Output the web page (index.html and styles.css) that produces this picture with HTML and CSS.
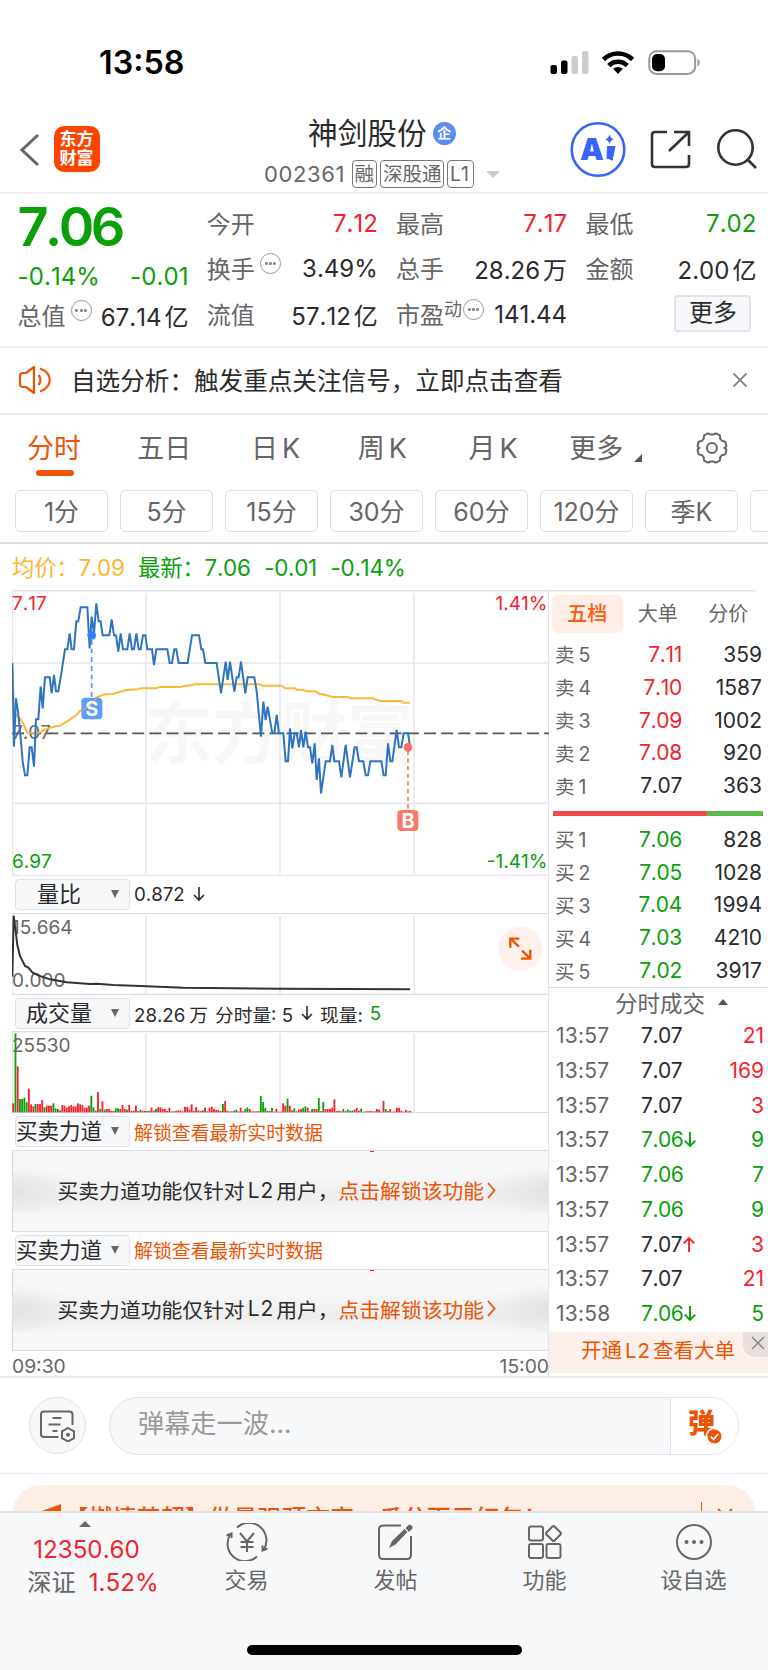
FILE: index.html
```html
<!DOCTYPE html>
<html lang="zh-CN">
<head>
    <meta charset="UTF-8">
    <meta name="viewport" content="width=device-width, initial-scale=1.0">
    <title>神剑股份 002361</title>
    <link rel="stylesheet" href="styles.css">
</head>
<body>
    <div class="status-bar">
        <span class="status-time">13:58</span>
        <svg class="status-icons" width="152" height="28" viewBox="549 49 152 28">
            <rect x="550.500" y="65" width="6.500" height="9" rx="2"/>
            <rect x="561" y="60.500" width="6.500" height="13.500" rx="2"/>
            <rect x="571.500" y="56" width="6.500" height="18" rx="2" fill="#ccc"/>
            <rect x="582" y="51" width="6.500" height="23" rx="2" fill="#ccc"/>
            <g fill="none" stroke="#000" stroke-width="4.600">
                <path d="M603.500 59.500a20.500 20.500 0 0 1 29 0"/>
                <path d="M608.800 65.600a13 13 0 0 1 18.400 0"/>
            </g>
            <path d="M618 74l-4.800-5.200a7 7 0 0 1 9.600 0z"/>
            <rect x="649.200" y="51.200" width="46" height="22.800" rx="7.500" fill="none" stroke="#999" stroke-width="2"/>
            <rect x="652" y="54" width="13" height="17.200" rx="5"/>
            <path d="M697.500 59c3 1 3 6 0 7.500z" fill="#999"/>
        </svg>
    </div>

    <header class="header">
        <svg class="back" width="22" height="34" viewBox="0 0 22 34"><path d="M19 2L3 17l16 15" fill="none" stroke="#666" stroke-width="3"/></svg>
        <div class="logo">东方<br>财富</div>
        <div class="stock">
            <div class="stock-name">神剑股份<i class="badge">企</i></div>
            <div class="stock-code">002361<span class="tags"><b>融</b><b>深股通</b><b>L1</b></span><i class="caret"></i></div>
        </div>
        <svg class="header-icons" width="198" height="60" viewBox="568 119 198 60">
            <circle cx="598" cy="149.500" r="26.300" fill="none" stroke="#3964fa" stroke-width="2.600"/>
            <text class="ai" x="580" y="160">A</text>
            <path d="M607 148.500h5.500l-1.500 8 q0 1.500 2 1.500M609.200 150v9" stroke="#3964fa" stroke-width="5" fill="none"/>
            <path d="M609.500 134.500q1 4 4.500 4.800q-3.500 1-4.500 4.800q-1-3.800-4.500-4.800q3.500-.8 4.500-4.800z" fill="#3964fa"/>
            <g fill="none" stroke="#333" stroke-width="2.600">
                <path d="M667 132h-12q-3 0-3 3v29q0 3 3 3h31q3 0 3-3v-9"/>
                <path d="M674 132h15v14M689 132l-20 19"/>
                <circle cx="735.500" cy="147.500" r="17.200"/>
                <path d="M747.500 159.500l8.500 8.500"/>
            </g>
        </svg>
    </header>

    <section class="quote">
        <div class="quote-main">
            <div class="price">7.06</div>
            <div class="change"><span>-0.14%</span><span>-0.01</span></div>
            <div class="cell"><label>总值</label><i class="dots"></i><span>67.14<em>亿</em></span></div>
        </div>
        <div class="quote-col">
            <div class="cell"><label>今开</label><span class="red">7.12</span></div>
            <div class="cell"><label>换手</label><i class="dots"></i><span>3.49%</span></div>
            <div class="cell"><label>流值</label><span>57.12<em>亿</em></span></div>
        </div>
        <div class="quote-col">
            <div class="cell"><label>最高</label><span class="red">7.17</span></div>
            <div class="cell"><label>总手</label><span>28.26<em>万</em></span></div>
            <div class="cell"><label>市盈<sup>动</sup></label><i class="dots near"></i><span>141.44</span></div>
        </div>
        <div class="quote-col">
            <div class="cell"><label>最低</label><span class="green">7.02</span></div>
            <div class="cell"><label>金额</label><span>2.00<em>亿</em></span></div>
            <div class="cell"><button class="more">更多</button></div>
        </div>
    </section>

    <section class="notice">
        <svg width="34" height="32" viewBox="0 0 34 32" fill="none" stroke="#ec5406" stroke-width="2.200" stroke-linejoin="round">
            <path d="M16 3v26l-8-6H5q-3 0-3-3v-8q0-3 3-3h3z"/>
            <path d="M20.500 11q4 5 0 10"/>
            <path d="M22 4.500c13 5 13 18 0 23"/>
        </svg>
        <p>自选分析：触发重点关注信号，立即点击查看</p>
        <svg class="close" width="16" height="16" viewBox="0 0 16 16"><path d="M1.500 1.500l13 13M14.500 1.500l-13 13" stroke="#888" stroke-width="1.800"/></svg>
    </section>

    <nav class="tabs">
        <a class="tab active">分时</a>
        <a class="tab">五日</a>
        <a class="tab">日<s></s>K</a>
        <a class="tab">周<s></s>K</a>
        <a class="tab">月<s></s>K</a>
        <a class="tab tab-more">更多</a>
        <svg class="gear" width="32" height="32" viewBox="0 0 32 32" fill="none" stroke="#666" stroke-width="2">
            <path d="M11.500 1.500q1.500-.5 2.500 1h4q1-1.500 2.500-1l3 1.500q1 1 .5 3l2 3q3 0 3.500 1.500l1 3.500q0 1-2 2q2 1 2 2l-1 3.500q-.5 1.500-3.500 1.500l-2 3q.5 2-.5 3l-3 1.500q-1.500.5-2.500-1h-4q-1 1.500-2.500 1l-3-1.500q-1-1-.5-3l-2-3q-3 0-3.500-1.500l-1-3.500q0-1 2-2q-2-1-2-2l1-3.500q.5-1.500 3.500-1.500l2-3q-.5-2 .5-3z" stroke-linejoin="round"/>
            <circle cx="16" cy="16" r="5"/>
        </svg>
    </nav>
    <div class="periods">
        <a>1分</a><a>5分</a><a>15分</a><a>30分</a><a>60分</a><a>120分</a><a>季K</a><a></a>
    </div>

    <div class="summary"><span class="avg">均价：<b>7.09</b></span><span class="last">最新：<b>7.06</b></span><span class="diff">-0.01</span><span>-0.14%</span></div>

    <main class="market">
        <div class="charts">
            <svg class="chart" width="537" height="286" viewBox="36 30 1611 858">
                <g class="grid">
                    <path d="M438 39V881M840 39V881M1242 39V881"/>
                    <path d="M36 249H1647M36 670H1647M36 887H1647M37 30V888"/>
                </g>
                <text class="watermark" x="435" y="534">东方财富</text>
                <path class="base-line" d="M36 460H1647"/>
                <text class="axis" x="36" y="477">7.07</text>
                <polyline class="avg-line" points="37,255 42,400 60,415 72,435 82,458 110,460 125,455 135,448 162,440 180,437 200,425 228,406 240,393 275,370 290,352 315,343 338,342 355,337 380,330 412,328 425,325 468,325 478,321 543,321 555,317 575,316 583,313 778,313 788,317 845,317 855,325 885,325 890,329 910,330 918,334 945,334 960,342 980,346 997,351 1043,351 1050,355 1120,355 1128,359 1140,363 1205,363 1212,368 1230,368"/>
                <polyline class="price-line" points="37,249 42,500 48,355 54,395 60,450 68,545 75,586 82,586 89,502 95,502 102,560 108,418 115,418 122,320 128,385 135,292 149,292 155,340 162,285 168,334 175,334 182,292 195,208 202,208 209,160 215,208 222,208 229,124 235,124 242,82 262,82 269,205 275,110 282,160 289,70 296,124 302,124 308,166 328,166 335,118 342,166 348,166 355,215 362,160 369,208 382,208 389,160 396,208 402,208 409,160 416,208 422,208 429,166 436,166 442,208 456,208 462,255 469,208 502,208 509,249 516,249 523,208 529,208 536,249 563,249 576,166 597,166 604,208 609,208 616,249 650,249 663,340 677,245 683,300 690,245 703,335 710,292 716,292 723,245 736,340 743,292 763,292 770,334 783,470 790,365 797,420 803,380 817,460 823,460 830,405 837,460 850,460 857,544 864,544 870,445 877,505 884,460 890,460 897,502 903,450 910,502 917,455 924,502 930,502 937,550 944,490 950,600 957,535 963,640 977,544 990,544 997,495 1003,544 1017,544 1024,592 1037,495 1050,592 1064,502 1070,502 1077,544 1090,544 1097,586 1104,586 1111,544 1144,544 1151,586 1157,586 1164,490 1171,544 1177,544 1190,450 1197,502 1204,502 1211,460 1224,460 1230,498"/>
                <!-- 买卖点 -->
                <path d="M275 180V355" stroke="#4c94f8" stroke-width="5" stroke-dasharray="14 12"/>
                <circle cx="275" cy="166" r="13" fill="#2f80f5"/>
                <rect x="244" y="353" width="63" height="65" rx="12" fill="#5b9dfc"/>
                <text class="mark" x="275.500" y="408">S</text>
                <path d="M247 392L275 370L290 354" class="avg-line" opacity=".45"/>
                <path d="M1224 512V690" stroke="#fb7768" stroke-width="5" stroke-dasharray="13 10"/>
                <circle cx="1224" cy="502" r="13" fill="#fb6d5d"/>
                <rect x="1192" y="690" width="63" height="63" rx="12" fill="#fb7768"/>
                <text class="mark" x="1224" y="744">B</text>
                <text class="axis up" x="36" y="89">7.17</text>
                <text class="axis down" x="36" y="865">6.97</text>
                <text class="axis up end" x="1642" y="89">1.41%</text>
                <text class="axis down end" x="1642" y="865">-1.41%</text>
            </svg>

            <div class="bar"><a class="select">量比</a><span>0.872</span><svg class="arrow" viewBox="0 0 12 16"><path d="M6 1v13M1 9l5 5 5-5"/></svg></div>
            <svg class="chart" width="537" height="82" viewBox="36 129 1611 246">
                <path class="grid" d="M438 137V373M840 137V373M1242 137V373M37 129V374"/>
                <path class="grid edge" d="M36 130H1647M36 373H1647"/>
                <text class="axis" x="36" y="192">15.664</text>
                <text class="axis" x="36" y="352">0.000</text>
                <polyline class="ratio-line" points="37,320 41,137 46,175 52,225 60,258 75,288 85,293 98,308 120,318 150,328 200,337 270,342 290,341 340,345 440,349 550,353 700,355 840,356 1230,358"/>
                <circle cx="1561" cy="236" r="66" fill="#fef1eb"/>
                <path class="expand" d="M1557 230L1531 206M1531 233V206H1558M1566 242L1591 266M1591 239V266H1563"/>
            </svg>

            <div class="bar"><a class="select">成交量</a><span>28.26<s></s>万</span><span class="gap">分时量: 5</span><svg class="arrow" viewBox="0 0 12 16"><path d="M6 1v13M1 9l5 5 5-5"/></svg><span class="gap">现量:</span><span class="gap green">5</span></div>
            <svg class="chart" width="537" height="82" viewBox="36 484 1611 246">
                <path class="grid" d="M438 492V728M840 492V728M1242 492V728M37 484V729"/>
                <path class="grid edge" d="M36 486H1647M36 729H1647"/>
                <g id="volume"></g>
                <text class="axis" x="36" y="547">25530</text>
            </svg>

            <div class="bar"><a class="select full">买卖力道</a><span class="lock">解锁查看最新实时数据</span></div>
            <div class="l2">买卖力道功能仅针对<em>L2</em>用户，<a>点击解锁该功能</a><svg width="9" height="17" viewBox="0 0 9 17"><path d="M1 1l6.500 7.500L1 16"/></svg></div>
            <div class="bar"><a class="select full">买卖力道</a><span class="lock">解锁查看最新实时数据</span></div>
            <div class="l2">买卖力道功能仅针对<em>L2</em>用户，<a>点击解锁该功能</a><svg width="9" height="17" viewBox="0 0 9 17"><path d="M1 1l6.500 7.500L1 16"/></svg></div>
            <div class="times"><span>09:30</span><span>15:00</span></div>
        </div>

        <aside class="side">
            <div class="side-tabs"><a class="on">五档</a><a>大单</a><a>分价</a></div>
            <ul class="book">
                <li><label>卖<s></s>5</label><b class="red">7.11</b><span>359</span></li>
                <li><label>卖<s></s>4</label><b class="red">7.10</b><span>1587</span></li>
                <li><label>卖<s></s>3</label><b class="red">7.09</b><span>1002</span></li>
                <li><label>卖<s></s>2</label><b class="red">7.08</b><span>920</span></li>
                <li><label>卖<s></s>1</label><b>7.07</b><span>363</span></li>
            </ul>
            <div class="ratio"></div>
            <ul class="book">
                <li><label>买<s></s>1</label><b class="green">7.06</b><span>828</span></li>
                <li><label>买<s></s>2</label><b class="green">7.05</b><span>1028</span></li>
                <li><label>买<s></s>3</label><b class="green">7.04</b><span>1994</span></li>
                <li><label>买<s></s>4</label><b class="green">7.03</b><span>4210</span></li>
                <li><label>买<s></s>5</label><b class="green">7.02</b><span>3917</span></li>
            </ul>
            <div class="deal-title">分时成交<i></i></div>
            <ul class="deals">
                <li><label>13:57</label><b>7.07</b><span class="red">21</span></li>
                <li><label>13:57</label><b>7.07</b><span class="red">169</span></li>
                <li><label>13:57</label><b>7.07</b><span class="red">3</span></li>
                <li><label>13:57</label><b class="green">7.06</b><svg class="arrow green" viewBox="0 0 12 16"><path d="M6 1v13M1 9l5 5 5-5"/></svg><span class="green">9</span></li>
                <li><label>13:57</label><b class="green">7.06</b><span class="green">7</span></li>
                <li><label>13:57</label><b class="green">7.06</b><span class="green">9</span></li>
                <li><label>13:57</label><b>7.07</b><svg class="arrow red" viewBox="0 0 12 16"><path d="M6 15V2M1 7l5-5 5 5"/></svg><span class="red">3</span></li>
                <li><label>13:57</label><b>7.07</b><span class="red">21</span></li>
                <li><label>13:58</label><b class="green">7.06</b><svg class="arrow green" viewBox="0 0 12 16"><path d="M6 1v13M1 9l5 5 5-5"/></svg><span class="green">5</span></li>
            </ul>
            <div class="promo">开通<em>L2</em>查看大单<i><svg width="14" height="14" viewBox="0 0 14 14"><path d="M1 1l12 12M13 1L1 13" stroke="#888" stroke-width="1.500"/></svg></i></div>
        </aside>
    </main>

    <section class="comment">
        <div class="round">
            <svg width="36" height="32" viewBox="0 0 36 32" fill="none" stroke="#666" stroke-width="2">
                <path d="M32.500 15V4.500q0-3-3-3H4q-3 0-3 3V24q0 3 3 3h14.500"/>
                <path d="M12.500 8h9M8.500 14.500h12M12.500 21h5"/>
                <path d="M28 18l6 3.400v6.800L28 31.500l-6-3.300v-6.800z"/>
                <circle cx="28" cy="24.800" r="1" fill="#666"/>
            </svg>
        </div>
        <div class="input">
            <span>弹幕走一波...</span>
            <div class="danmu">弹<svg width="15" height="15" viewBox="0 0 15 15"><circle cx="7.500" cy="7.500" r="7" fill="#ec5406"/><path d="M3.800 7.500l2.700 3 4.700-5.500" fill="none" stroke="#fff" stroke-width="1.800"/></svg></div>
        </div>
    </section>

    <section class="banner-wrap">
        <div class="banner">
            <svg width="24" height="24" viewBox="0 0 24 24"><path d="M0 10L22 2v20L0 14z" fill="#ec5406"/></svg>
            <span>【燃情英超】做最强预言家，瓜分百元红包！</span>
            <i></i>
            <svg width="18" height="18" viewBox="0 0 18 18"><path d="M2 2l14 14M16 2L2 16" stroke="#ec5406" stroke-width="2"/></svg>
        </div>
    </section>

    <footer class="nav">
        <div class="nav-row">
            <div class="index">
                <i></i>
                <div>12350.60</div>
                <div><label>深证</label>1.52%</div>
            </div>
            <div class="nav-item">
                <svg width="42" height="38" viewBox="0 0 42 38">
                    <path d="M11 4.500A17.500 17.500 0 0 1 37.500 27M31 33.500A17.500 17.500 0 0 1 4.500 11M.5 12.500l5-2v4.500M36.500 22.500V27.500l5-2"/>
                    <path d="M14 10l7 8.500L28 10M21 18.500V29M14.500 19h13M14.500 24h13"/>
                </svg>
                交易
            </div>
            <div class="nav-item">
                <svg width="42" height="38" viewBox="0 0 42 38">
                    <path d="M26 2.500H8q-4 0-4 4V32q0 4 4 4h24q4 0 4-4V13"/>
                    <path d="M14 25l3-7L29.500 6l3 3L20.500 21.500zM30.500 5L33.500 2q2-1 3.500 1t-.5 3.500L34 9z" fill="#666" stroke="none"/>
                </svg>
                发帖
            </div>
            <div class="nav-item">
                <svg width="42" height="38" viewBox="0 0 42 38">
                    <rect x="5" y="3.500" width="14" height="14" rx="2"/>
                    <rect x="5" y="21" width="14" height="14" rx="2"/>
                    <rect x="22.500" y="21" width="14" height="14" rx="2"/>
                    <path d="M28.500 3.500q1-1 2 0l6 6q1 1 0 2l-6 6q-1 1-2 0l-6-6q-1-1 0-2z"/>
                </svg>
                功能
            </div>
            <div class="nav-item">
                <svg width="42" height="38" viewBox="0 0 42 38">
                    <circle cx="21" cy="19" r="17"/>
                    <g fill="#666" stroke="none"><circle cx="13.500" cy="19" r="2"/><circle cx="21" cy="19" r="2"/><circle cx="28.500" cy="19" r="2"/></g>
                </svg>
                设自选
            </div>
        </div>
        <div class="home"></div>
    </footer>

    <script src="script.js"></script>
</body>
</html>
```
FILE: styles.css
```css
:root {
    --red: #f5222d;
    --green: #0aa00a;
    --orange: #ec5406;
    --gray: #666;
    --dark: #2b2b2b;
    --line: #e2e5ea;
}

* {
    box-sizing: border-box;
    margin: 0;
    padding: 0;
}

body {
    width: 768px;
    height: 1670px;
    overflow: hidden;
    background: #fff;
    color: var(--dark);
    font-family: Inter, 'Noto Sans CJK SC', sans-serif;
    font-size: 24px;
    font-kerning: none;
    display: flex;
    flex-direction: column;
}

body > * {
    flex-shrink: 0;
}

i, em {
    font-style: normal;
}

b, button {
    font-weight: 400;
}

ul {
    list-style: none;
}

/* 中英文之间的小空隙 */
s {
    display: inline-block;
    width: 4px;
}

.red { color: var(--red); }
.green { color: var(--green); }

/* 状态栏 */
.status-bar {
    height: 112px;
    padding: 46px 67px 0 99px;
    display: flex;
    justify-content: space-between;
}

.status-time {
    font-size: 32.3px;
    font-weight: 600;
    line-height: 34px;
    color: #000;
}

.status-icons {
    margin-top: 3px;
}

/* 顶部 */
.header {
    height: 82px;
    border-bottom: 2px solid #eee;
    display: flex;
    padding-left: 19px;
    color: var(--dark);
}

.back {
    margin-top: 21px;
}

.logo {
    width: 46px;
    height: 46px;
    margin: 14px 0 0 12.5px;
    border-radius: 10px;
    background: #ff4400;
    color: #fff;
    font-size: 17px;
    line-height: 19px;
    padding-top: 4px;
    text-align: center;
    font-weight: 700;
}

.stock {
    width: 240px;
    margin-left: 164.5px;
}

.stock-name {
    padding-left: 44px;
    height: 42px;
    font-size: 29.7px;
    line-height: 42px;
    display: flex;
    align-items: center;
}

.badge {
    width: 23px;
    height: 23px;
    margin-left: 6px;
    border-radius: 50%;
    background: #5b8def;
    color: #fff;
    font-size: 14px;
    line-height: 22px;
    text-align: center;
    font-weight: 700;
}

.stock-code {
    display: flex;
    align-items: center;
    height: 40px;
    font-size: 22px;
    letter-spacing: 0.6px;
    color: var(--gray);
}

.tags {
    display: flex;
    gap: 3px;
    margin-left: 7px;
    letter-spacing: 0;
}

.tags b {
    height: 28px;
    line-height: 26px;
    padding: 0 1.5px;
    border: 1.5px solid #777;
    border-radius: 4px;
    font-size: 19.5px;
}

.tags b:nth-child(1) { width: 25.5px; padding: 0 1.5px; }
.tags b:nth-child(3) { width: 27px; padding: 0 2px; }

.caret {
    margin-left: 12px;
    border: 7px solid transparent;
    border-top: 7px solid #ccc;
    border-bottom: 0;
}

.header-icons {
    margin: 7px 0 0 64px;
}

.ai {
    font-size: 30px;
    font-weight: 900;
    fill: #3964fa;
}

/* 行情 */
.quote {
    height: 154px;
    padding: 6px 0 0 17.5px;
    border-bottom: 2px solid #eceef2;
    display: flex;
    gap: 18.3px;
}

.quote-main, .quote-col {
    width: 171px;
}

.price {
    height: 53px;
    line-height: 54px;
    font-size: 54px;
    font-weight: 600;
    letter-spacing: -3.6px;
    color: var(--green);
}

.change {
    height: 40px;
    line-height: 48px;
    display: flex;
    justify-content: space-between;
    color: var(--green);
    letter-spacing: 0.1px;
}

.cell {
    height: 46px;
    display: flex;
    align-items: center;
    white-space: nowrap;
}

.cell + .cell {
    padding-bottom: 1px;
}

.quote-main .cell {
    height: 45px;
    padding-bottom: 1px;
}

.cell label {
    color: var(--gray);
    margin-top: -2px;
}

.cell span {
    margin-left: auto;
}

.cell em {
    margin-left: 3px;
}

.cell sup {
    font-size: 18px;
    line-height: 18px;
    display: inline-block;
    vertical-align: 8px;
}

.dots {
    width: 21px;
    height: 21px;
    margin: -10px 0 0 5px;
    border: 1.5px solid #999;
    border-radius: 50%;
    background: radial-gradient(circle, #888 1.2px, transparent 1.8px) 50% 50% / 4.8px 9px no-repeat,
        radial-gradient(circle, #888 1.2px, transparent 1.8px) 20% 50% / 4.8px 9px no-repeat,
        radial-gradient(circle, #888 1.2px, transparent 1.8px) 80% 50% / 4.8px 9px no-repeat;
}

.dots.near {
    margin-left: 1px;
}

.more {
    width: 77px;
    height: 37px;
    margin: -3px 5px 0 auto;
    border: 2px solid #e0e3e9;
    border-radius: 4px;
    background: #f7f8fa;
    color: var(--dark);
    font: inherit;
    line-height: 30px;
}

/* 提示条 */
.notice {
    height: 67px;
    padding: 0 20px 0 18px;
    border-bottom: 2px solid #eee;
    display: flex;
    align-items: center;
}

.notice p {
    margin: -3px 0 0 19px;
    font-size: 24.6px;
}

.notice svg {
    margin-top: -2px;
}

.notice .close {
    margin-left: auto;
}

/* 周期切换 */
.tabs {
    height: 75px;
    display: flex;
    padding: 0 40px 0 27px;
    color: var(--gray);
    font-size: 27px;
    line-height: 67px;
}

.tab {
    width: 110.5px;
    position: relative;
}

.tab:nth-child(2) { width: 114px; }
.tab:nth-child(3) { width: 107px; }
.tab:nth-child(4) { width: 111px; }
.tab:nth-child(5) { width: 101px; }

.tab.active {
    color: var(--orange);
}

.tab.active::after {
    content: '';
    position: absolute;
    left: 9px;
    top: 55px;
    width: 38px;
    height: 6px;
    border-radius: 3px;
    background: var(--orange);
}

.tab-more {
    width: 127px;
}

.tab-more::after {
    content: '';
    display: inline-block;
    margin-left: 11px;
    border-left: 8px solid transparent;
    border-bottom: 8px solid #555;
    vertical-align: -4px;
}

.gear {
    margin-top: 17px;
}

.periods {
    height: 54px;
    padding-left: 15px;
    border-bottom: 2px solid #dcdfe6;
    display: flex;
    gap: 12px;
    overflow: hidden;
}

.periods a {
    flex: 0 0 93px;
    height: 42px;
    border: 1.5px solid #ddd;
    border-radius: 5px;
    text-align: center;
    line-height: 42px;
    font-size: 25px;
    color: var(--gray);
}

.summary {
    height: 46px;
    line-height: 48px;
    padding-left: 12px;
    display: flex;
    gap: 13.5px;
    font-size: 22.4px;
    letter-spacing: -0.25px;
    color: var(--green);
}

.summary .avg {
    color: #fdb62f;
}

/* 主区域 */
.market {
    height: 788px;
    display: flex;
    border-bottom: 2px solid #e9ebef;
    background: linear-gradient(var(--line), var(--line)) 12px 0 / 744px 1.5px no-repeat;
}

.charts {
    width: 549px;
    padding-left: 12px;
    border-right: 1px solid var(--line);
}

.chart {
    display: block;
}

.grid {
    fill: none;
    stroke: #e6e8ee;
    stroke-width: 5;
}

.grid.edge {
    stroke: #dadde4;
    stroke-width: 4;
}

.watermark {
    font-size: 202px;
    font-weight: 700;
    fill: #f7f7f7;
}

.base-line {
    stroke: #555;
    stroke-width: 5;
    stroke-dasharray: 36 15.5;
}

.avg-line, .price-line, .ratio-line {
    fill: none;
    stroke-width: 6;
}

.avg-line { stroke: #fdb83a; }
.price-line { stroke: #2f74c0; }
.ratio-line { stroke: #333; }

.axis {
    font-size: 57px;
    fill: #666;
}

.axis.up { fill: var(--red); }
.axis.down { fill: var(--green); }
.axis.end { text-anchor: end; }

.mark {
    font-size: 60px;
    font-weight: 700;
    fill: #fff;
    text-anchor: middle;
}

.expand {
    fill: none;
    stroke: var(--orange);
    stroke-width: 7;
}

.bar {
    height: 36.7px;
    padding-left: 3px;
    display: flex;
    align-items: center;
    font-size: 18.7px;
    white-space: nowrap;
}

.select {
    width: 115px;
    height: 31px;
    margin-right: 4px;
    padding-right: 27px;
    border: 1.5px solid #dde0e6;
    border-radius: 4px;
    background: #f7f8fa;
    text-align: center;
    line-height: 28px;
    font-size: 22px;
    position: relative;
}

.select::after {
    content: '';
    position: absolute;
    right: 10px;
    top: 10px;
    border: 4.5px solid transparent;
    border-top: 8px solid #666;
    border-bottom: 0;
}

.select.full {
    padding: 0;
    text-align: left;
    font-size: 21.5px;
}

.lock {
    color: var(--orange);
    font-size: 18.9px;
    margin-top: -1px;
}

.arrow {
    width: 12px;
    height: 16px;
    margin-left: 8px;
    fill: none;
    stroke: currentColor;
    stroke-width: 1.6;
}

.gap {
    margin-left: 7px;
}

.l2 {
    height: 82px;
    padding: 0 0 2px 44.5px;
    border: 1.5px solid #dadde4;
    border-right: 0;
    display: flex;
    align-items: center;
    font-size: 20.8px;
    white-space: nowrap;
    background:
        linear-gradient(#f5222d, #f5222d) 357px 0 / 4px 1px no-repeat,
        radial-gradient(ellipse 60px 26px at 0 50%, #e2e2e2, transparent),
        radial-gradient(ellipse 60px 26px at 100% 50%, #e2e2e2, transparent),
        linear-gradient(#f8f8f8 25%, #eeeeee 58%, #f7f7f7 80%);
}

.l2 em, .promo em {
    margin: 0 2px 0 3px;
    letter-spacing: 1px;
}

.l2 a {
    color: var(--orange);
}

.l2 svg {
    margin-left: 3px;
    fill: none;
    stroke: var(--orange);
    stroke-width: 1.8;
}

.times {
    display: flex;
    justify-content: space-between;
    font-size: 19.3px;
    line-height: 30px;
    color: var(--gray);
    margin-right: -1px;
}

/* 五档盘口 */
.side {
    width: 219px;
    display: flex;
    flex-direction: column;
}

.side-tabs {
    height: 47.8px;
    padding: 5px 0 0 3px;
    display: flex;
    font-size: 20px;
    line-height: 38px;
    color: var(--gray);
}

.side-tabs a {
    width: 70.5px;
    text-align: center;
}

.side-tabs .on {
    height: 38px;
    border-radius: 6px;
    background: #feeee6;
    color: #fe5a0a;
    font-weight: 500;
}

.book li, .deals li {
    height: 32.9px;
    padding: 0 6px;
    display: flex;
    align-items: center;
    font-size: 21px;
}

.book label, .deals label {
    width: 70px;
    color: var(--gray);
}

.book label {
    font-size: 19.5px;
    margin-top: -1px;
}

.book s {
    width: 4px;
}

.book b {
    width: 57px;
    text-align: right;
    letter-spacing: -0.3px;
}

.book li span, .deals span {
    margin-left: auto;
}

.ratio {
    height: 5px;
    margin: 8.5px 5px 7px 4px;
    background: linear-gradient(#ef4b4e, #ef4b4e) 0 0 / 154px 5px no-repeat, #5bba47;
}

.deal-title {
    height: 31px;
    border-top: 1.5px solid #dadde4;
    padding: 0 0 2px 66px;
    display: flex;
    align-items: center;
    font-size: 22.5px;
    color: var(--gray);
}

.deal-title i {
    margin-left: 13px;
    border: 5px solid transparent;
    border-bottom: 6px solid #555;
    border-top: 0;
}

.deals li {
    height: 34.75px;
    padding: 0 4px 0 7px;
}

.deals label {
    width: 85px;
    letter-spacing: 0.2px;
}

.deals b {
    letter-spacing: -0.5px;
}

.deals .arrow {
    margin-left: 0;
    width: 14px;
    height: 17px;
    stroke-width: 1.8;
}

.promo {
    position: relative;
    height: 41px;
    margin-top: 1px;
    padding-left: 32px;
    background: #fdf0ea;
    color: var(--orange);
    font-size: 20.5px;
    line-height: 38px;
}

.promo i {
    position: absolute;
    right: 0;
    top: 0;
    width: 25px;
    height: 25px;
    border-bottom-left-radius: 12px;
    background: #e8e0dd;
}

.promo svg {
    position: absolute;
    left: 8px;
    top: 4px;
}

/* 弹幕 */
.comment {
    height: 96px;
    padding: 19px 29px 0;
    border-bottom: 1px solid #eee;
    display: flex;
    gap: 23px;
}

.round {
    width: 57px;
    height: 57px;
    border: 1.5px solid #dfe2e8;
    border-radius: 50%;
    background: #f7f8fa;
    display: flex;
    align-items: center;
    justify-content: center;
}

.input {
    flex: 1;
    height: 57.5px;
    padding-left: 28px;
    border: 1.5px solid #dfe2e8;
    border-radius: 29px;
    background: #f7f8fa;
    display: flex;
    justify-content: space-between;
    font-size: 26.2px;
    line-height: 51px;
    color: #999;
}

.danmu {
    width: 68px;
    padding-left: 17px;
    border-radius: 0 27px 27px 0;
    background: #fff;
    border-left: 1.5px solid #dfe2e8;
    color: var(--orange);
    font-weight: 900;
    font-size: 27px;
    line-height: 52px;
    position: relative;
}

.danmu svg {
    position: absolute;
    left: 36px;
    top: 31px;
    border-radius: 50%;
    box-shadow: 0 0 0 1.5px #fff;
}

.banner-wrap {
    height: 37px;
    padding: 11px 12px 0;
    overflow: hidden;
}

.banner {
    height: 58px;
    padding: 15px 22px 0 27px;
    border-radius: 29px;
    background: #fdeee6;
    color: var(--orange);
    display: flex;
    font-size: 24.2px;
    line-height: 37px;
}

.banner span {
    margin-left: 1px;
    font-weight: 500;
}

.banner i {
    width: 1.5px;
    height: 24px;
    margin: 2px 14px 0 auto;
    background: var(--orange);
}

.banner svg {
    margin-top: 2px;
}

.banner i + svg {
    margin-top: 7px;
}

/* 底部导航 */
.nav {
    flex: 1;
    border-top: 2px solid #dfe2e8;
    background: #f7f8fa;
}

.nav-row {
    height: 132px;
    display: flex;
    color: var(--gray);
}

.index {
    width: 172px;
    color: var(--red);
    text-align: center;
    font-size: 24.2px;
    line-height: 33px;
    padding: 8px 0 0 14px;
}

.index i {
    display: block;
    width: 0;
    margin: 0 auto 6px 65px;
    border: 6.5px solid transparent;
    border-bottom: 6.5px solid #666;
    border-top: 0;
}

.index div:nth-child(2) {
    margin-right: 13px;
}

.index label {
    color: var(--gray);
    margin-right: 13px;
}

.nav-item {
    width: 149px;
    padding-top: 10px;
    display: flex;
    flex-direction: column;
    align-items: center;
    font-size: 22px;
    line-height: 38px;
}

.nav-item svg {
    fill: none;
    stroke: #666;
    stroke-width: 2;
}

.home {
    width: 275px;
    height: 10px;
    margin: 0 auto;
    border-radius: 5px;
    background: #000;
}
```
FILE: script.js
```js
// 成交量: r 红柱, g 绿柱, 数字为高度
const volumes = ('r27 g237 r138 g40 g40 g44 g30 r71 r24 r18 g25 r25 r25 r37 g15 r20 r20 r20 g27 g12 r10 g6 r22 r20 r14 r18 r22 r18 r18 ' +
    'r27 r24 r22 r14 r14 r20 g50 g15 r5 r61 g10 r33 g8 r10 r10 r5 r4 g12 g12 r10 r22 r10 g8 r22 r4 r5 r20 r4 g8 r5 r4 g4 r5 r14 r5 g10 ' +
    'r15 r15 r10 r10 r4 r14 r3 g3 r4 r6 r5 r3 r17 r16 r8 r24 r4 r16 r6 r4 g6 r14 r3 r14 r17 r10 r7 r7 r4 g25 r34 r5 r3 r3 g5 g8 r3 r14 r3 ' +
    'g10 g15 r10 r3 r3 r3 r4 g49 g31 g14 r5 r4 g13 r2 r10 r2 r2 r27 r20 g41 r20 r6 g12 r3 r8 r10 g14 g18 r14 r3 g10 r10 r10 g43 r4 g31 ' +
    'r10 r10 r10 r14 r39 r4 r5 r3 g10 r4 g8 g5 g5 r8 r13 r5 g11 r2 r3 r3 r4 r3 r3 r10 r8 r2 r34 g10 r4 r10 r2 r3 r14 r13 r5 r2 r7 r3 r4').split(' ');

const group = document.getElementById('volume');
const step = 1191 / (volumes.length - 1);

volumes.forEach((item, i) => {
    const rect = document.createElementNS('http://www.w3.org/2000/svg', 'rect');
    const h = Number(item.slice(1));
    rect.setAttribute('x', 37 + i * step);
    rect.setAttribute('y', 728 - h);
    rect.setAttribute('width', 5.5);
    rect.setAttribute('height', h);
    rect.setAttribute('fill', item[0] === 'r' ? '#f5222d' : '#0aa00a');
    group.appendChild(rect);
});
```
